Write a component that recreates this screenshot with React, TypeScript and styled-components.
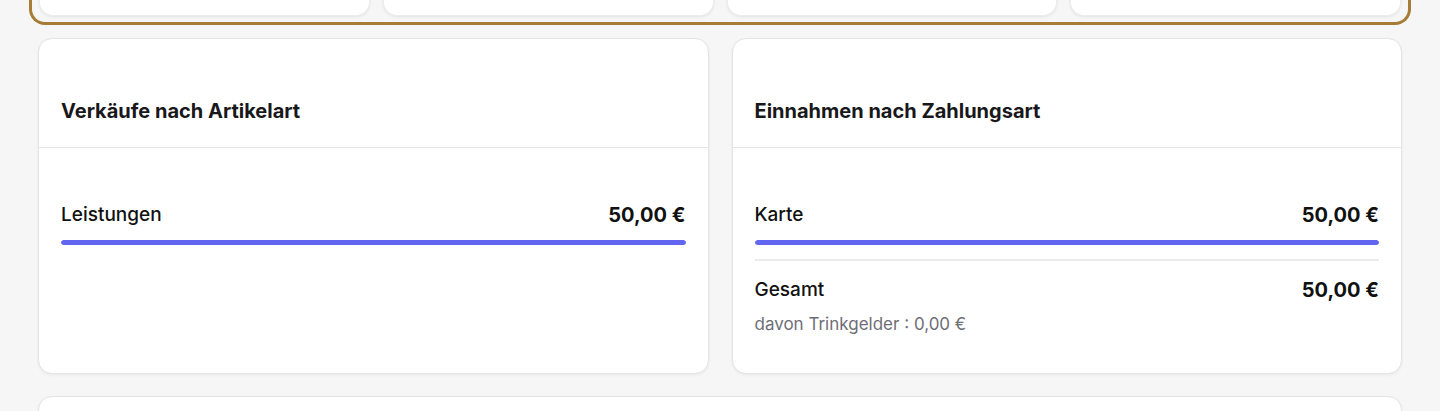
import React from 'react';
import styled, { createGlobalStyle } from 'styled-components';

const GlobalStyle = createGlobalStyle`
  html, body {
    margin: 0;
    padding: 0;
    background: #f6f6f6;
    font-family: Inter, "Noto Sans", sans-serif;
    color: #18181b;
  }
`;

const Page = styled.div`
  padding: 0 29px 40px;
  display: flex;
  flex-direction: column;
`;

const Highlight = styled.div`
  margin-top: -80px;
  border: 3px solid #a67c37;
  border-top: none;
  border-radius: 0 0 16px 16px;
  padding: 0 7px 6px 7px;
  display: grid;
  grid-template-columns: repeat(4, 1fr);
  gap: 13px;
`;

const StatCard = styled.div`
  height: 95px;
  background: #fff;
  border-radius: 0 0 14px 14px;
  box-shadow: 0 1px 3px rgba(0, 0, 0, 0.08);
  border: 1px solid #ececec;
  border-top: none;
`;

const Grid = styled.div`
  margin-top: 13px;
  padding: 0 9px;
  display: grid;
  grid-template-columns: 1fr 1fr;
  gap: 23px;
`;

const Card = styled.div`
  background: #fff;
  border: 1px solid #e4e4e4;
  border-radius: 14px;
  box-shadow: 0 1px 3px rgba(0, 0, 0, 0.06);
  height: 336px;
  box-sizing: border-box;
  display: flex;
  flex-direction: column;
`;

const WideCard = styled(Card)`
  margin: 22px 9px 0;
  height: 120px;
`;

const CardHeader = styled.div`
  padding: 58px 22px 22px;
  border-bottom: 1px solid #e6e6e6;
`;

const Title = styled.h2`
  margin: 0;
  font-size: 20px;
  line-height: 28px;
  font-weight: 700;
  color: #18181b;
`;

const CardBody = styled.div`
  padding: 55px 22px 24px;
  display: flex;
  flex-direction: column;
`;

const Row = styled.div`
  display: flex;
  justify-content: space-between;
  align-items: center;
  line-height: 24px;
`;

const Label = styled.span`
  font-size: 19px;
  font-weight: 500;
  color: #111;
`;

const Amount = styled.span`
  font-size: 20px;
  font-weight: 700;
  color: #111;
`;

const Bar = styled.div`
  margin-top: 13px;
  height: 5px;
  border-radius: 3px;
  background: #eef0ff;
  overflow: hidden;
`;

const BarFill = styled.div`
  height: 100%;
  background: #6366f1;
  border-radius: 3px;
`;

const Divider = styled.div`
  margin: 14px 0 17px;
  height: 2px;
  background: #ebebeb;
`;

const Note = styled.div`
  margin-top: 11px;
  font-size: 17px;
  line-height: 22px;
  color: #6e6e76;
`;

type Item = { label: string; value: number };

const fmt = (n: number) =>
  n.toLocaleString('de-DE', { minimumFractionDigits: 2, maximumFractionDigits: 2 }) + ' €';

function BarRow({ item, total }: { item: Item; total: number }) {
  return (
    <>
      <Row>
        <Label>{item.label}</Label>
        <Amount>{fmt(item.value)}</Amount>
      </Row>
      <Bar>
        <BarFill style={{ width: `${(item.value / total) * 100}%` }} />
      </Bar>
    </>
  );
}

export default function App() {
  const articles: Item[] = [{ label: 'Leistungen', value: 50 }];
  const payments: Item[] = [{ label: 'Karte', value: 50 }];
  const total = payments.reduce((s, p) => s + p.value, 0);

  return (
    <Page>
      <GlobalStyle />
      <Highlight>
        <StatCard />
        <StatCard />
        <StatCard />
        <StatCard />
      </Highlight>
      <Grid>
        <Card>
          <CardHeader>
            <Title>Verkäufe nach Artikelart</Title>
          </CardHeader>
          <CardBody>
            {articles.map((a) => (
              <BarRow key={a.label} item={a} total={50} />
            ))}
          </CardBody>
        </Card>
        <Card>
          <CardHeader>
            <Title>Einnahmen nach Zahlungsart</Title>
          </CardHeader>
          <CardBody>
            {payments.map((p) => (
              <BarRow key={p.label} item={p} total={total} />
            ))}
            <Divider />
            <Row>
              <Label>Gesamt</Label>
              <Amount>{fmt(total)}</Amount>
            </Row>
            <Note>davon Trinkgelder : {fmt(0)}</Note>
          </CardBody>
        </Card>
      </Grid>
      <WideCard />
    </Page>
  );
}
